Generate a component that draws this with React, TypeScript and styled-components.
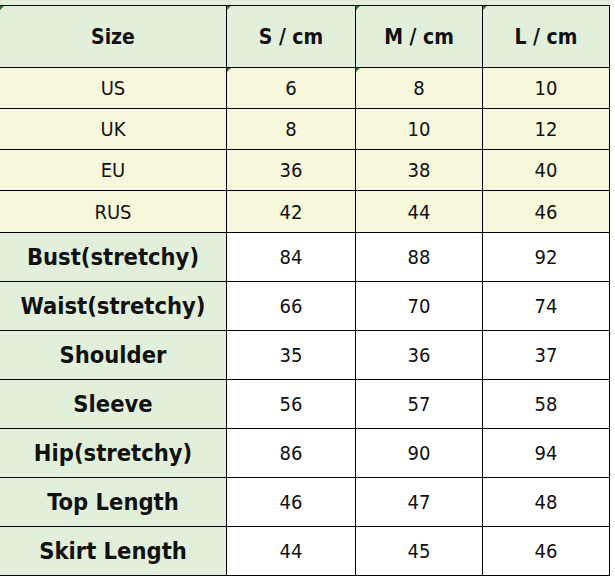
import styled, { createGlobalStyle } from "styled-components";

const GlobalStyle = createGlobalStyle`
    html, body {
        margin: 0;
        padding: 0;
        background: #ffffff;
    }
`;

const Sheet = styled.div`
    width: 610px;
    padding-top: 5px;
    background: linear-gradient(#e2efda 0 5px, #ffffff 5px);
    font-family: "DejaVu Sans Condensed", "DejaVu Sans", sans-serif;
    color: #111;
`;

const Table = styled.div`
    display: flex;
    flex-direction: column;
    gap: 1px;
    background: #000;
    padding: 1px 1px 1px 0;
`;

const Row = styled.div<{ $h: number }>`
    display: grid;
    grid-template-columns: 226px 128px 126px 126px;
    gap: 1px;
    height: ${(p) => p.$h}px;
`;

const Cell = styled.div<{ $bg: string; $bold?: boolean; $size: number }>`
    position: relative;
    display: flex;
    align-items: center;
    justify-content: center;
    background: ${(p) => p.$bg};
    font-weight: ${(p) => (p.$bold ? 700 : 400)};
    font-size: ${(p) => p.$size}px;
    white-space: nowrap;
`;

const Marker = styled.span`
    position: absolute;
    top: 0;
    left: 0;
    width: 0;
    height: 0;
    border-top: 4px solid #2f7a2f;
    border-right: 4px solid transparent;
`;

const GREEN = "#e2efda";
const YELLOW = "#f7f7dc";
const WHITE = "#ffffff";

const sizes = [
    { label: "US", values: ["6", "8", "10"], marks: [false, true, true, false] },
    { label: "UK", values: ["8", "10", "12"], marks: [false, false, false, false] },
    { label: "EU", values: ["36", "38", "40"], marks: [false, false, false, false] },
    { label: "RUS", values: ["42", "44", "46"], marks: [false, false, false, false] },
];

const measures = [
    { label: "Bust(stretchy)", values: ["84", "88", "92"] },
    { label: "Waist(stretchy)", values: ["66", "70", "74"] },
    { label: "Shoulder", values: ["35", "36", "37"] },
    { label: "Sleeve", values: ["56", "57", "58"] },
    { label: "Hip(stretchy)", values: ["86", "90", "94"] },
    { label: "Top Length", values: ["46", "47", "48"] },
    { label: "Skirt Length", values: ["44", "45", "46"] },
];

export default function App() {
    return (
        <>
            <GlobalStyle />
            <Sheet>
                <Table>
                    <Row $h={61}>
                        {["Size", "S / cm", "M / cm", "L / cm"].map((t) => (
                            <Cell key={t} $bg={GREEN} $bold $size={21}>
                                <Marker />
                                {t}
                            </Cell>
                        ))}
                    </Row>
                    {sizes.map((r, i) => (
                        <Row key={r.label} $h={i === 3 ? 41 : 40}>
                            <Cell $bg={YELLOW} $size={20}>{r.label}</Cell>
                            {r.values.map((v, j) => (
                                <Cell key={j} $bg={YELLOW} $size={20}>
                                    {r.marks[j + 1] && <Marker />}
                                    {v}
                                </Cell>
                            ))}
                        </Row>
                    ))}
                    {measures.map((r) => (
                        <Row key={r.label} $h={48}>
                            <Cell $bg={GREEN} $bold $size={23.5}>{r.label}</Cell>
                            {r.values.map((v, j) => (
                                <Cell key={j} $bg={WHITE} $size={20}>{v}</Cell>
                            ))}
                        </Row>
                    ))}
                </Table>
            </Sheet>
        </>
    );
}
